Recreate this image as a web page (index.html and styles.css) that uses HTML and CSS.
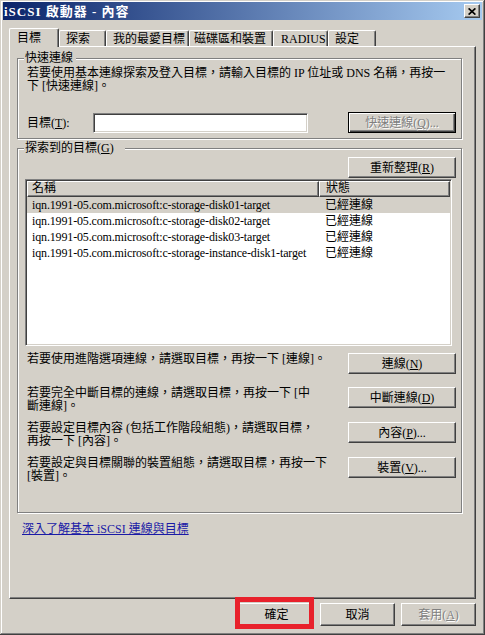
FILE: index.html
```html
<!DOCTYPE html>
<html>
<head>
<meta charset="utf-8">
<link rel="stylesheet" href="styles.css">
</head>
<body>
<div class="window">
  <div class="titlebar">
    <span class="title">iSCSI 啟動器 - 內容</span>
    <span class="close"><svg width="8" height="7" viewBox="0 0 8 7"><path d="M0.6 0.4 L7.4 6.6 M7.4 0.4 L0.6 6.6" stroke="#000" stroke-width="1.7" fill="none"/></svg></span>
  </div>
  <div class="content">
    <div class="tabs">
      <div class="tab active w1">目標</div>
      <div class="tab w2">探索</div>
      <div class="tab w3">我的最愛目標</div>
      <div class="tab w4">磁碟區和裝置</div>
      <div class="tab w5">RADIUS</div>
      <div class="tab w6">設定</div>
    </div>
    <div class="panel">
      <div class="group g1">
        <div class="group-title">快速連線</div>
        <div class="desc">若要使用基本連線探索及登入目標，請輸入目標的 IP 位址或 DNS 名稱，再按一<br>下 [快速連線]。</div>
        <div class="quick-row">
          <span class="qlabel">目標(<u>T</u>):</span>
          <span class="input"></span>
          <button class="btn wide default disabled">快速連線(<u>Q</u>)...</button>
        </div>
      </div>
      <div class="group g2">
        <div class="group-title t2">探索到的目標(<u>G</u>)</div>
        <div class="refresh-row"><button class="btn wide">重新整理(<u>R</u>)</button></div>
        <div class="listview">
          <div class="lv-head"><div class="hc c1">名稱</div><div class="hc c2">狀態</div></div>
          <div class="lv-row sel"><div class="c1 latin">iqn.1991-05.com.microsoft:c-storage-disk01-target</div><div class="c2">已經連線</div></div>
          <div class="lv-row"><div class="c1 latin">iqn.1991-05.com.microsoft:c-storage-disk02-target</div><div class="c2">已經連線</div></div>
          <div class="lv-row"><div class="c1 latin">iqn.1991-05.com.microsoft:c-storage-disk03-target</div><div class="c2">已經連線</div></div>
          <div class="lv-row"><div class="c1 latin">iqn.1991-05.com.microsoft:c-storage-instance-disk1-target</div><div class="c2">已經連線</div></div>
        </div>
        <div class="action-row first">
          <div class="atext">若要使用進階選項連線，請選取目標，再按一下 [連線]。</div>
          <button class="btn wide">連線(<u>N</u>)</button>
        </div>
        <div class="action-row">
          <div class="atext">若要完全中斷目標的連線，請選取目標，再按一下 [中<br>斷連線]。</div>
          <button class="btn wide">中斷連線(<u>D</u>)</button>
        </div>
        <div class="action-row">
          <div class="atext">若要設定目標內容 (包括工作階段組態)，請選取目標，<br>再按一下 [內容]。</div>
          <button class="btn wide">內容(<u>P</u>)...</button>
        </div>
        <div class="action-row">
          <div class="atext">若要設定與目標關聯的裝置組態，請選取目標，再按一下<br>[裝置]。</div>
          <button class="btn wide">裝置(<u>V</u>)...</button>
        </div>
      </div>
      <a class="link" href="#">深入了解基本 iSCSI 連線與目標</a>
    </div>
    <div class="buttons">
      <span class="ok-wrap"><button class="btn dlg">確定</button><span class="redbox"></span></span>
      <button class="btn dlg">取消</button>
      <button class="btn dlg disabled">套用(<u>A</u>)</button>
    </div>
  </div>
</div>
</body>
</html>
```

FILE: styles.css
```css
* { box-sizing: border-box; }
html, body { margin: 0; padding: 0; }
body {
  width: 485px;
  height: 635px;
  overflow: hidden;
  background: #d4d0c8;
  font-family: "Liberation Serif", "Noto Sans CJK TC", serif;
  font-size: 12px;
  line-height: 12px;
  color: #000;
}
.window {
  width: 485px;
  height: 635px;
  padding: 2px 3px 3px 3px;
  background: #d4d0c8;
  box-shadow: inset -1px -1px #404040, inset 1px 1px #d4d0c8, inset -2px -2px #808080, inset 2px 2px #fff;
  display: flex;
  flex-direction: column;
}
.titlebar {
  height: 18px;
  flex: none;
  display: flex;
  align-items: center;
  justify-content: space-between;
  padding: 0 2px 0 1px;
  background: linear-gradient(to right, #0a246a, #a6caf0);
}
.title {
  color: #fff;
  font-weight: bold;
  font-size: 13px;
  line-height: 13px;
  letter-spacing: 1px;
  white-space: nowrap;
}
.close {
  width: 16px;
  height: 14px;
  background: #d4d0c8;
  border: 1px solid;
  border-color: #fff #404040 #404040 #fff;
  box-shadow: inset -1px -1px #808080;
  display: flex;
  align-items: center;
  justify-content: center;
}
.close svg { display: block; }
.content {
  flex: 1;
  display: flex;
  flex-direction: column;
  padding: 8px 6px 0 6px;
}
.tabs {
  display: flex;
  align-items: flex-end;
  height: 19px;
  margin-bottom: -1px;
  position: relative;
  z-index: 1;
}
.tab {
  height: 16px;
  margin-bottom: 1px;
  background: #d4d0c8;
  border-top: 1px solid #fff;
  border-left: 1px solid #fff;
  border-right: 1px solid #404040;
  border-top-left-radius: 2px;
  border-top-right-radius: 2px;
  box-shadow: inset -1px 0 #808080;
  padding: 2px 0 0 6px;
  white-space: nowrap;
}
.tab.active {
  height: 19px;
  margin-bottom: 0;
  padding: 3px 0 0 7px;
}
.w1 { width: 50px; }
.w2 { width: 47px; }
.w3 { width: 83px; }
.w4 { width: 84px; padding-left: 4px; }
.w5 { width: 55px; padding-left: 7px; }
.w6 { width: 48px; }
.panel {
  height: 553px;
  flex: none;
  border: 1px solid;
  border-color: #fff #404040 #404040 #fff;
  box-shadow: inset -1px -1px #808080;
  padding: 11px 13px 0 7px;
  display: flex;
  flex-direction: column;
}
.group {
  position: relative;
  border: 1px solid #808080;
  box-shadow: 1px 1px 0 #fff, inset 1px 1px 0 #fff;
}
.group-title {
  position: absolute;
  top: -7px;
  left: 6px;
  padding: 0 3px 0 1px;
  background: #d4d0c8;
  white-space: nowrap;
}
.group-title.t2 { padding-right: 11px; }
.g1 {
  height: 81px;
  padding: 8px 5px 5px 9px;
}
.desc {
  white-space: nowrap;
  line-height: 13px;
}
.quick-row {
  display: flex;
  align-items: center;
  height: 21px;
  margin-top: 19px;
}
.qlabel { width: 66px; }
.input {
  width: 215px;
  height: 20px;
  background: #fff;
  border: 1px solid;
  border-color: #808080 #fff #fff #808080;
  box-shadow: inset 1px 1px #404040, inset -1px -1px #d4d0c8;
}
.btn {
  font-family: inherit;
  font-size: 12px;
  line-height: 12px;
  color: #000;
  margin: 0;
  padding: 0;
  background: #d4d0c8;
  border: 1px solid;
  border-color: #fff #404040 #404040 #fff;
  box-shadow: inset -1px -1px #808080, inset 1px 1px #d4d0c8;
  display: flex;
  align-items: center;
  justify-content: center;
  white-space: nowrap;
}
.btn.wide {
  width: 108px;
  height: 21px;
  margin-left: auto;
  flex: none;
}
.btn.default {
  border-color: #000;
  box-shadow: inset 1px 1px #fff, inset -1px -1px #404040, inset -2px -2px #808080;
}
.btn.disabled {
  color: #808080;
  text-shadow: 1px 1px 0 #fff;
}
.g2 {
  margin-top: 9px;
  height: 365px;
  padding: 8px 5px 0 9px;
}
.refresh-row {
  display: flex;
  height: 21px;
}
.listview {
  margin: 1px 0 0 -2px;
  width: 427px;
  height: 167px;
  background: #fff;
  border: 1px solid;
  border-color: #808080 #fff #fff #808080;
  box-shadow: inset 1px 1px #404040, inset -1px -1px #d4d0c8;
  padding: 1px;
}
.lv-head {
  display: flex;
  height: 16px;
}
.hc {
  background: #d4d0c8;
  border: 1px solid;
  border-color: #fff #404040 #404040 #fff;
  box-shadow: inset -1px -1px #808080;
  line-height: 13px;
}
.lv-head .c1 { width: 292px; padding-left: 4px; }
.lv-head .c2 { flex: 1; padding-left: 6px; }
.lv-row {
  display: flex;
  height: 16px;
  line-height: 16px;
  white-space: nowrap;
}
.lv-row.sel { background: #d4d0c8; }
.lv-row .c1 { width: 292px; padding-left: 5px; }
.lv-row .c2 { padding-left: 6px; }
.latin { letter-spacing: -0.15px; }
.action-row {
  display: flex;
  align-items: flex-start;
  height: 21px;
  margin-top: 14px;
}
.action-row.first { margin-top: 7px; margin-bottom: -1px; }
.atext {
  white-space: nowrap;
  line-height: 13px;
}
.link {
  margin: 10px 0 0 5px;
  color: #1a1aa6;
  text-decoration: underline;
  white-space: nowrap;
  align-self: flex-start;
}
.buttons {
  display: flex;
  justify-content: flex-end;
  gap: 6px;
  margin-top: 4px;
}
.ok-wrap { position: relative; display: block; }
.btn.dlg {
  width: 75px;
  height: 23px;
}
.redbox {
  position: absolute;
  left: -4px;
  top: -6px;
  width: 79px;
  height: 32px;
  border: 5px solid #e8212b;
}
```
